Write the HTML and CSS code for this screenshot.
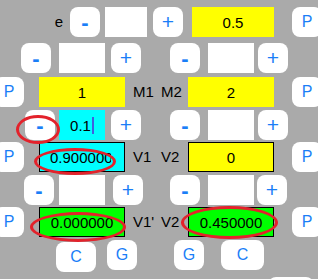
FILE: index.html
```html
<!DOCTYPE html>
<html lang="en">

<head>
    <meta charset="UTF-8">
    <meta name="viewport" content="width=device-width, initial-scale=1.0">
    <title>Collision</title>
    <link rel="stylesheet" href="styles.css">
</head>

<body>
    <div class="screen">
        <!-- e (restitution) -->
        <div class="row r1">
            <span class="label lab-e">e</span>
            <button class="btn minus ml7">-</button>
            <div class="field blank w42 ml5"></div>
            <button class="btn plus ml6">+</button>
            <div class="field yellow w82 ml9">0.5</div>
            <button class="btn ml18">P</button>
        </div>

        <!-- mass steppers -->
        <div class="row r2">
            <button class="btn minus ml21">-</button>
            <div class="field blank ml8"></div>
            <button class="btn plus ml6">+</button>
            <button class="btn minus ml29">-</button>
            <div class="field blank ml8"></div>
            <button class="btn plus ml4">+</button>
        </div>

        <div class="row r3">
            <button class="btn edge-left">P</button>
            <div class="field yellow wide ml15">1</div>
            <span class="label lab-left">M1</span>
            <span class="label lab-right">M2</span>
            <div class="field yellow wide">2</div>
            <button class="btn ml18">P</button>
        </div>

        <!-- velocity steppers -->
        <div class="row r4">
            <button class="btn minus ml25">-</button>
            <div class="field cyan ml4">0.1<span class="caret"></span></div>
            <button class="btn plus ml6">+</button>
            <button class="btn minus ml29">-</button>
            <div class="field blank ml8"></div>
            <button class="btn plus ml4">+</button>
        </div>

        <div class="row r5">
            <button class="btn edge-left">P</button>
            <div class="field cyan boxed wide ml15 clipped"><span class="clip">0.900000</span></div>
            <span class="label lab-left">V1</span>
            <span class="label lab-right">V2</span>
            <div class="field yellow boxed wide">0</div>
            <button class="btn ml18">P</button>
        </div>

        <div class="row r6">
            <button class="btn minus ml24">-</button>
            <div class="field blank ml5"></div>
            <button class="btn plus ml8">+</button>
            <button class="btn minus ml27">-</button>
            <div class="field blank ml8"></div>
            <button class="btn plus ml3">+</button>
        </div>

        <!-- results -->
        <div class="row r7">
            <button class="btn edge-left">P</button>
            <div class="field green boxed wide ml15">0.000000</div>
            <span class="label lab-left">V1'</span>
            <span class="label lab-right">V2</span>
            <div class="field green boxed wide">0.450000</div>
            <button class="btn ml18">P</button>
        </div>

        <div class="row r8">
            <button class="btn w40 ml56 low">C</button>
            <button class="btn ml11">G</button>
            <button class="btn ml37">G</button>
            <button class="btn w43 ml17">C</button>
        </div>

        <div class="row r9">
            <button class="btn w46 ml268"></button>
        </div>

        <!-- red marks drawn over the screen -->
        <div class="mark mark-minus"></div>
        <div class="mark mark-v1"></div>
        <div class="mark mark-v1p"></div>
        <div class="mark mark-v2p"></div>
    </div>
</body>

</html>
```

FILE: styles.css
```css
body {
    margin: 0;
    font-family: "Liberation Sans", Arial, sans-serif;
}

.screen {
    position: relative;
    width: 318px;
    height: 279px;
    overflow: hidden;
    background: #aaaaaa;
}

.row {
    display: flex;
    align-items: flex-start;
    height: 30px;
}

.r1 { padding-top: 7px; }
.r2 { margin-top: 6px; }
.r3 { margin-top: 4px; }
.r4 { margin-top: 3px; }
.r5 { margin-top: 2px; }
.r6 { margin-top: 3px; }
.r7 { margin-top: 2px; }
.r8 { margin-top: 3px; }
.r9 { margin-top: 7px; }

.btn {
    flex: none;
    display: flex;
    align-items: center;
    justify-content: center;
    width: 30px;
    height: 30px;
    padding: 0;
    border: 0;
    border-radius: 8px;
    background: #fff;
    color: #1a7ef7;
    font-family: "Liberation Sans", Arial, sans-serif;
    font-size: 16px;
}

.btn.minus {
    font-size: 22px;
    font-weight: bold;
    padding-top: 2px;
}

.btn.plus {
    font-size: 21px;
}

.btn.low {
    margin-top: 2px;
}

.edge-left {
    margin-left: -6px;
}

.field {
    flex: none;
    display: flex;
    align-items: center;
    justify-content: center;
    box-sizing: border-box;
    width: 46px;
    height: 30px;
    font-size: 15px;
    color: #000;
}

.blank { background: #fff; }
.yellow { background: #ffff00; }
.cyan { background: #00ffff; }
.green { background: #00ff00; }
.boxed { border: 1px solid #000; }
.wide { width: 86px; }

.clipped {
    justify-content: flex-start;
    padding-left: 10px;
}

.clip {
    width: 61px;
    overflow: hidden;
    white-space: nowrap;
}

.caret {
    width: 2px;
    height: 17px;
    margin-left: 1px;
    background: #3f5fe0;
}

.label {
    flex: none;
    height: 30px;
    line-height: 30px;
    font-size: 15px;
    color: #000;
}

.lab-e {
    width: 63px;
    text-align: right;
}

.lab-left {
    width: 28px;
    margin-left: 8px;
}

.lab-right {
    width: 27px;
}

.w40 { width: 40px; }
.w42 { width: 42px; }
.w43 { width: 43px; }
.w46 { width: 46px; }
.w82 { width: 82px; }

.ml3 { margin-left: 3px; }
.ml4 { margin-left: 4px; }
.ml5 { margin-left: 5px; }
.ml6 { margin-left: 6px; }
.ml7 { margin-left: 7px; }
.ml8 { margin-left: 8px; }
.ml9 { margin-left: 9px; }
.ml11 { margin-left: 11px; }
.ml15 { margin-left: 15px; }
.ml17 { margin-left: 17px; }
.ml18 { margin-left: 18px; }
.ml21 { margin-left: 21px; }
.ml24 { margin-left: 24px; }
.ml25 { margin-left: 25px; }
.ml27 { margin-left: 27px; }
.ml29 { margin-left: 29px; }
.ml37 { margin-left: 37px; }
.ml56 { margin-left: 56px; }
.ml268 { margin-left: 268px; }

.mark {
    position: absolute;
    box-sizing: border-box;
    border: 3px solid #e3222b;
    border-radius: 50%;
}

.mark-minus { left: 16px; top: 115px; width: 44px; height: 29px; }
.mark-v1 { left: 34px; top: 148px; width: 82px; height: 27px; }
.mark-v1p { left: 30px; top: 212px; width: 96px; height: 30px; }
.mark-v2p { left: 181px; top: 206px; width: 97px; height: 33px; }
```
